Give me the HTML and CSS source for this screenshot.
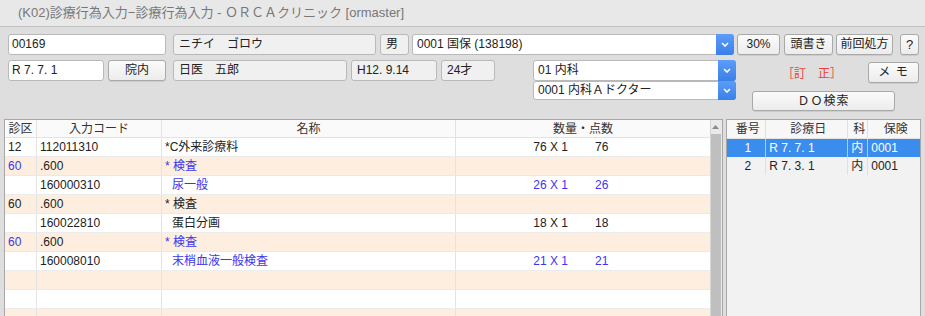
FILE: index.html
```html
<!DOCTYPE html>
<html lang="ja">
<head>
    <meta charset="UTF-8">
    <title>診療行為入力</title>
    <link rel="stylesheet" href="styles.css">
</head>
<body>
    <div class="titlebar">(K02)診療行為入力−診療行為入力 - ＯＲＣＡクリニック [ormaster]</div>

    <div class="form">
        <div class="row">
            <div class="field w-id">00169</div>
            <div class="field ro w-kana">ニチイ　ゴロウ</div>
            <div class="field ro w-sex">男</div>
            <div class="select w-hoken">
                <span class="val">0001 国保 (138198)</span>
                <span class="drop"><svg width="8" height="5" viewBox="0 0 8 5"><polyline points="1,1 4,4 7,1" fill="none" stroke="#fff" stroke-width="1.6"/></svg></span>
            </div>
            <button class="btn w-rate">30%</button>
            <button class="btn w-atama">頭書き</button>
            <button class="btn w-zenkai">前回処方</button>
            <button class="btn w-help">?</button>
        </div>

        <div class="row row2">
            <div class="field w-date">R 7. 7. 1</div>
            <button class="btn w-innai">院内</button>
            <div class="field ro w-doc">日医　五郎</div>
            <div class="field ro w-birth">H12. 9.14</div>
            <div class="field ro w-age">24才</div>

            <div class="selects">
                <div class="select sel1">
                    <span class="val">01 内科</span>
                    <span class="drop"><svg width="8" height="5" viewBox="0 0 8 5"><polyline points="1,1 4,4 7,1" fill="none" stroke="#fff" stroke-width="1.6"/></svg></span>
                </div>
                <div class="select sel2">
                    <span class="val">0001 内科Ａドクター</span>
                    <span class="drop"><svg width="8" height="5" viewBox="0 0 8 5"><polyline points="1,1 4,4 7,1" fill="none" stroke="#fff" stroke-width="1.6"/></svg></span>
                </div>
            </div>

            <div class="side">
                <div class="side-top">
                    <span class="teisei">［訂　正］</span>
                    <button class="btn w-memo">メ モ</button>
                </div>
                <button class="btn w-do">ＤＯ検索</button>
            </div>
        </div>
    </div>

    <div class="main">
        <div class="panel list">
            <div class="grid">
                <div class="tr head">
                    <div class="td c">診区</div>
                    <div class="td c">入力コード</div>
                    <div class="td c">名称</div>
                    <div class="td c">数量・点数</div>
                </div>
                <div class="tr">
                    <div class="td">12</div>
                    <div class="td">112011310</div>
                    <div class="td">*C外来診療料</div>
                    <div class="td"><span class="qty">76 X 1</span><span class="pts">76</span></div>
                </div>
                <div class="tr alt">
                    <div class="td blue">60</div>
                    <div class="td">.600</div>
                    <div class="td blue">* 検査</div>
                    <div class="td"></div>
                </div>
                <div class="tr">
                    <div class="td"></div>
                    <div class="td">160000310</div>
                    <div class="td blue sub">尿一般</div>
                    <div class="td blue"><span class="qty">26 X 1</span><span class="pts">26</span></div>
                </div>
                <div class="tr alt">
                    <div class="td">60</div>
                    <div class="td">.600</div>
                    <div class="td">* 検査</div>
                    <div class="td"></div>
                </div>
                <div class="tr">
                    <div class="td"></div>
                    <div class="td">160022810</div>
                    <div class="td sub">蛋白分画</div>
                    <div class="td"><span class="qty">18 X 1</span><span class="pts">18</span></div>
                </div>
                <div class="tr alt">
                    <div class="td blue">60</div>
                    <div class="td">.600</div>
                    <div class="td blue">* 検査</div>
                    <div class="td"></div>
                </div>
                <div class="tr">
                    <div class="td"></div>
                    <div class="td">160008010</div>
                    <div class="td blue sub">末梢血液一般検査</div>
                    <div class="td blue"><span class="qty">21 X 1</span><span class="pts">21</span></div>
                </div>
                <div class="tr alt"><div class="td"></div><div class="td"></div><div class="td"></div><div class="td"></div></div>
                <div class="tr"><div class="td"></div><div class="td"></div><div class="td"></div><div class="td"></div></div>
                <div class="tr alt"><div class="td"></div><div class="td"></div><div class="td"></div><div class="td"></div></div>
            </div>
            <div class="scrollbar">
                <div class="arrow"><svg width="7" height="4" viewBox="0 0 7 4"><polygon points="0,4 3.5,0 7,4" fill="#8a8a8a"/></svg></div>
                <div class="thumb"></div>
            </div>
        </div>

        <div class="panel history">
            <div class="hrow hhead">
                <div class="hd c">番号</div>
                <div class="hd c">診療日</div>
                <div class="hd c">科</div>
                <div class="hd c">保険</div>
            </div>
            <div class="hrow selected">
                <div class="hd c">1</div>
                <div class="hd">R 7. 7. 1</div>
                <div class="hd">内</div>
                <div class="hd">0001</div>
            </div>
            <div class="hrow">
                <div class="hd c">2</div>
                <div class="hd">R 7. 3. 1</div>
                <div class="hd">内</div>
                <div class="hd">0001</div>
            </div>
        </div>
    </div>
</body>
</html>
```

FILE: styles.css
```css
*{
    margin: 0;
    padding: 0;
    box-sizing: border-box;
}
body{
    background-color: #dedede;
    font-family: "Liberation Sans", "Noto Sans CJK JP", sans-serif;
    font-size: 12px;
    color: #222;
    overflow: hidden;
    height: 316px;
}
.titlebar{
    height: 27px;
    background-color: #e8e8e8;
    border-bottom: 1px solid #c2c2c2;
    color: #777;
    font-size: 13px;
    line-height: 26px;
    padding-left: 18px;
}
.form{
    padding: 7px 0 0 8px;
}
.row{
    display: flex;
    gap: 3px;
    height: 21px;
}
.row2{
    margin-top: 5px;
    height: auto;
    align-items: flex-start;
}
.field{
    height: 21px;
    background-color: #fff;
    border: 1px solid #b9b9b9;
    border-radius: 3px;
    padding-left: 3px;
    line-height: 19px;
    white-space: nowrap;
}
.field.ro{
    background-color: #f0f0f0;
    padding-left: 5px;
}
.btn{
    height: 21px;
    font-family: inherit;
    font-size: 12px;
    color: #222;
    background: linear-gradient(#fbfbfb, #ececec);
    border: 1px solid #a9a9a9;
    border-radius: 3px;
    box-shadow: 0 1px 0 rgba(0,0,0,0.08);
    line-height: 19px;
    text-align: center;
}
.select{
    display: flex;
    height: 21px;
    background-color: #fff;
    border: 1px solid #b9b9b9;
    border-radius: 3px;
}
.select .val{
    flex: 1;
    padding-left: 4px;
    line-height: 19px;
    white-space: nowrap;
}
.select .drop{
    width: 18px;
    margin: -1px -1px -1px 0;
    background: linear-gradient(#5c9df7, #3b7fe9);
    border-radius: 0 3px 3px 0;
    display: flex;
    align-items: center;
    justify-content: center;
}
.w-id{ width: 158px; }
.w-kana{ width: 203px; margin-left: 4px; }
.w-sex{ width: 29px; margin-left: 1px; }
.w-hoken{ width: 322px; }
.w-rate{ width: 43px; }
.w-atama{ width: 49px; margin-left: 1px; }
.w-zenkai{ width: 57px; }
.w-help{ width: 19px; margin-left: 4px; font-size: 13px; }
.w-date{ width: 96px; }
.w-innai{ width: 58px; margin-left: 1px; }
.w-doc{ width: 174px; margin-left: 4px; }
.w-birth{ width: 86px; margin-left: 1px; padding-left: 3px; }
.w-age{ width: 54px; margin-left: 1px; padding-left: 6px; }
.selects{
    width: 203px;
    margin-left: 35px;
    display: flex;
    flex-direction: column;
}
.sel2{
    height: 19px;
}
.sel2 .val{
    line-height: 17px;
}
.side{
    width: 167px;
    margin-left: 13px;
    padding-top: 2px;
    display: flex;
    flex-direction: column;
    gap: 8px;
}
.side-top{
    display: flex;
    align-items: center;
    padding-left: 30px;
}
.teisei{
    color: #f03c3c;
    font-size: 12px;
}
.w-memo{
    width: 51px;
    margin-left: auto;
    height: 21px;
    letter-spacing: 1px;
}
.w-do{
    width: 143px;
    height: 20px;
    letter-spacing: 1px;
}
.main{
    display: flex;
    gap: 3px;
    margin-top: 8px;
    padding: 0 4px;
}
.panel{
    border: 1px solid #a7a7a7;
    height: 210px;
    overflow: hidden;
}
.list{
    width: 720px;
    display: flex;
    background-color: #fff;
}
.grid{
    width: 705px;
}
.tr{
    display: grid;
    grid-template-columns: 32px 125px 294px 254px;
    height: 19px;
    border-bottom: 1px solid #ececec;
    background-color: #fff;
}
.tr.alt{
    background-color: #fdeee0;
    border-bottom-color: #f3e6da;
}
.tr.head{
    height: 18px;
    background-color: #fafafa;
    border-bottom-color: #e3e3e3;
    color: #333;
}
.td{
    border-right: 1px solid #e3e3e3;
    padding-left: 3px;
    line-height: 18px;
    white-space: nowrap;
}
.td:last-child{
    border-right: 0;
}
.c{
    text-align: center;
    padding-left: 0;
}
.sub{
    padding-left: 10px;
}
.blue{
    color: #3b35f0;
}
.qty{
    display: inline-block;
    width: 109px;
    text-align: right;
}
.pts{
    margin-left: 27px;
}
.scrollbar{
    width: 13px;
    background-color: #e9e9e9;
    border-left: 1px solid #d6d6d6;
}
.arrow{
    height: 14px;
    display: flex;
    justify-content: center;
    align-items: center;
    padding-right: 2px;
}
.thumb{
    width: 10px;
    height: 200px;
    background-color: #bfbfbf;
}
.history{
    width: 195px;
    background-color: #f2f2f2;
}
.hrow{
    display: grid;
    grid-template-columns: 39px 82px 20px 52px;
    height: 18px;
}
.hrow.hhead{
    height: 19px;
    background-color: #f7f7f7;
    border-bottom: 1px solid #e2e2e2;
    color: #333;
}
.hd{
    border-right: 1px solid #e0e0e0;
    padding-left: 3px;
    line-height: 18px;
    white-space: nowrap;
}
.hd:last-child{
    border-right: 0;
}
.hrow.selected{
    background-color: #3b8ded;
    color: #fff;
}
.hrow.selected .hd{
    border-right-color: #a9cdf5;
}
```
